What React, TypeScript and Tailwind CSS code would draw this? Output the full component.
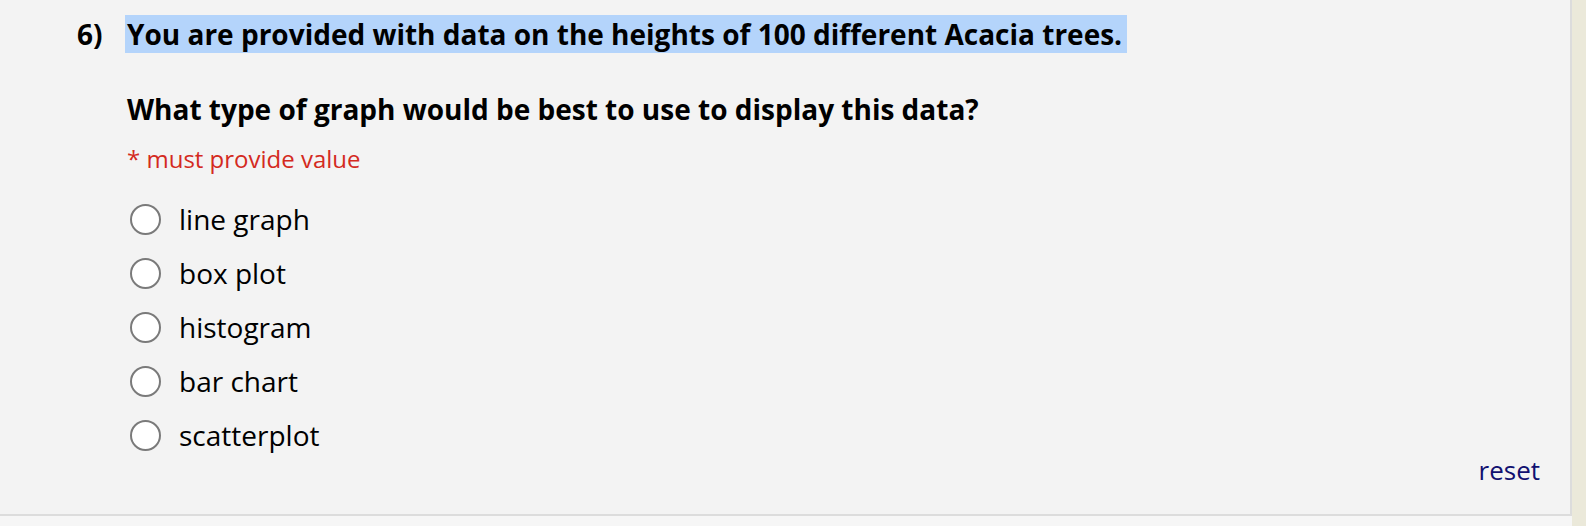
const options = ["line graph", "box plot", "histogram", "bar chart", "scatterplot"];

function Radio({ label }: { label: string }) {
  return (
    <label className="flex h-[54px] items-center gap-[18px]">
      <span className="h-[31px] w-[31px] shrink-0 rounded-full border-2 border-[#7a7a7a] bg-white" />
      <span className="text-[28px] leading-none text-black">{label}</span>
    </label>
  );
}

export default function App() {
  return (
    <div
      className="flex h-[526px] w-[1586px] bg-[#f6f6f6]"
      style={{ fontFamily: '"Open Sans", "Noto Sans", sans-serif' }}
    >
      <div className="flex h-[516px] w-[1572px] border-b-2 border-r-2 border-[#dcdcdc] bg-[#f3f3f3]">
        <div className="w-[125px] shrink-0 pt-[16px] pl-[77px] text-[28px] font-bold leading-[37px] text-black">
          6)
        </div>
        <div className="flex flex-1 flex-col pt-[16px] pr-[30px]">
          <h2 className="text-[28px] font-bold leading-[37px] text-black">
            <span className="bg-[#b4d4fb] pl-[2px] pr-[5px]">
              You are provided with data on the heights of 100 different Acacia trees.
            </span>
          </h2>
          <p className="mt-[38px] pl-[2px] text-[28px] font-bold leading-[37px] text-black">
            What type of graph would be best to use to display this data?
          </p>
          <p className="mt-[16px] pl-[2px] text-[24px] leading-[30px] text-[#d42a1e]">* must provide value</p>
          <div className="mt-[18px] flex flex-col pl-[5px]">
            {options.map((o) => (
              <Radio key={o} label={o} />
            ))}
          </div>
          <div className="-mt-[8px] text-right text-[26px] leading-[32px] text-[#101070]">reset</div>
        </div>
      </div>
      <div className="h-full flex-1 bg-[#ebe9da]" />
    </div>
  );
}
